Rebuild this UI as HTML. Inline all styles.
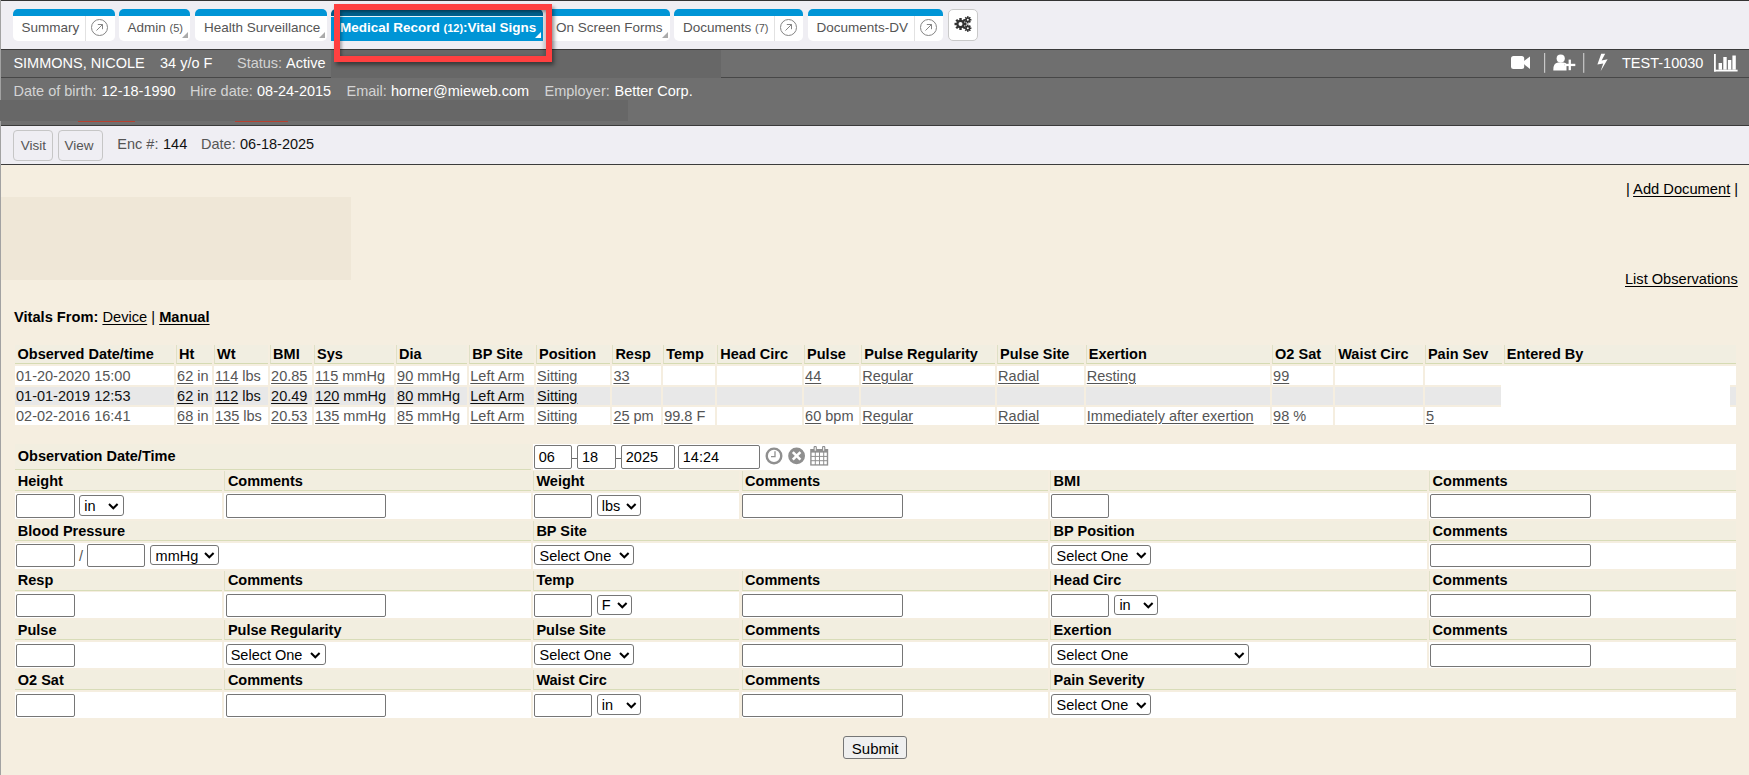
<!DOCTYPE html><html><head><meta charset="utf-8"><style>
*{box-sizing:border-box}
html,body{margin:0;padding:0}
body{width:1749px;height:775px;overflow:hidden;position:relative;background:#f5eee0;font-family:"Liberation Sans",sans-serif;color:#000}
.a{position:absolute}
.t{line-height:20px;white-space:nowrap}
u{text-decoration:underline;text-underline-offset:1.5px}
.tab{position:absolute;top:9px;height:31.6px;background:#fff;border-top:7px solid #0095d6;border-radius:5px;font-size:13.5px;color:#555;white-space:nowrap}
.tab .tt{position:absolute;top:4.3px;line-height:16px}
.tab small{font-size:11px}
.tab .dv{position:absolute;top:0;bottom:0;width:1px;background:#e2e2e2}
.tab .circ{position:absolute;top:2.5px;width:17px;height:17px;border:1px solid #858585;border-radius:50%}
.tri{position:absolute;right:2px;bottom:3px;width:0;height:0;border-left:6px solid transparent;border-bottom:6px solid #aaa}
.btn{position:absolute;border:1px solid #c6c6c6;border-radius:4px;font-size:13.5px;color:#555;text-align:center}
.inp{position:absolute;background:#fff;border:1px solid #767676;border-radius:2px}
.sel{position:absolute;background:#fff;border:1px solid #767676;border-radius:3px;font-size:14.5px;line-height:18px;white-space:nowrap;overflow:hidden}
.sel svg{position:absolute;top:6.5px}
</style></head><body>
<div class="a" style="left:0.00px;top:0.00px;width:1749.00px;height:49.00px;background:#efeef3;border-top:1px solid #333"></div>
<div class="tab" style="left:13px;width:102px;"><span class="tt" style="left:8.5px">Summary</span><div class="dv" style="left:71.5px"></div><div class="circ" style="left:77.5px"><svg width="15" height="15" viewBox="0 0 15 15" style="position:absolute;left:0;top:0"><path d="M4.5 10.5 L10.5 4.5 M5.8 4.5 H10.5 V9.2" stroke="#858585" stroke-width="1" fill="none"/></svg></div></div>
<div class="tab" style="left:119px;width:71px;"><span class="tt" style="left:8.5px">Admin <small>(5)</small></span><div class="tri"></div></div>
<div class="tab" style="left:195px;width:132px;"><span class="tt" style="left:9px">Health Surveillance</span><div class="tri"></div></div>
<div class="tab" style="left:547px;width:123px;"><span class="tt" style="left:9px">On Screen Forms</span><div class="tri"></div></div>
<div class="tab" style="left:674px;width:129px;"><span class="tt" style="left:9px">Documents <small>(7)</small></span><div class="dv" style="left:99.5px"></div><div class="circ" style="left:105.5px"><svg width="15" height="15" viewBox="0 0 15 15" style="position:absolute;left:0;top:0"><path d="M4.5 10.5 L10.5 4.5 M5.8 4.5 H10.5 V9.2" stroke="#858585" stroke-width="1" fill="none"/></svg></div></div>
<div class="tab" style="left:808px;width:135px;"><span class="tt" style="left:8.5px">Documents-DV</span><div class="dv" style="left:105.5px"></div><div class="circ" style="left:111.5px"><svg width="15" height="15" viewBox="0 0 15 15" style="position:absolute;left:0;top:0"><path d="M4.5 10.5 L10.5 4.5 M5.8 4.5 H10.5 V9.2" stroke="#858585" stroke-width="1" fill="none"/></svg></div></div>
<div class="a" style="left:948px;top:9px;width:30px;height:31.5px;background:#fff;border:1px solid #c9c9c9;border-radius:5px"></div>
<svg class="a" style="left:953px;top:16px" width="20" height="18" viewBox="0 0 20 18">
<g fill="#333">
<circle cx="7.5" cy="8" r="4.2"/>
<g transform="translate(7.5 8)"><rect x="-1.2" y="-6" width="2.4" height="12"/><rect x="-6" y="-1.2" width="12" height="2.4"/><rect x="-1.2" y="-6" width="2.4" height="12" transform="rotate(45)"/><rect x="-1.2" y="-6" width="2.4" height="12" transform="rotate(-45)"/></g>
<circle cx="14.8" cy="3.8" r="2.4"/>
<g transform="translate(14.8 3.8)"><rect x="-.8" y="-3.6" width="1.6" height="7.2"/><rect x="-3.6" y="-.8" width="7.2" height="1.6"/><rect x="-.8" y="-3.6" width="1.6" height="7.2" transform="rotate(45)"/><rect x="-.8" y="-3.6" width="1.6" height="7.2" transform="rotate(-45)"/></g>
<circle cx="14.8" cy="12.2" r="2.4"/>
<g transform="translate(14.8 12.2)"><rect x="-.8" y="-3.6" width="1.6" height="7.2"/><rect x="-3.6" y="-.8" width="7.2" height="1.6"/><rect x="-.8" y="-3.6" width="1.6" height="7.2" transform="rotate(45)"/><rect x="-.8" y="-3.6" width="1.6" height="7.2" transform="rotate(-45)"/></g>
</g>
<circle cx="7.5" cy="8" r="2" fill="#fff"/><circle cx="14.8" cy="3.8" r="1" fill="#fff"/><circle cx="14.8" cy="12.2" r="1" fill="#fff"/>
</svg>
<div class="a" style="left:0.00px;top:49.00px;width:1749.00px;height:77.00px;background:#6f6f6f;border-top:1px solid #3a3a3a;border-bottom:1px solid #3a3a3a"></div>
<div class="a" style="left:0.00px;top:77.00px;width:1749.00px;height:1.00px;background:#474747"></div>
<div class="a" style="left:331.00px;top:50.00px;width:390.00px;height:27.60px;background:#676767"></div>
<div class="a" style="left:0.00px;top:100.00px;width:628.00px;height:21.00px;background:#676767"></div>
<div class="a" style="left:78.00px;top:121.00px;width:57.00px;height:1.00px;background:#b8402f"></div>
<div class="a" style="left:235.00px;top:121.00px;width:53.00px;height:1.00px;background:#b8402f"></div>
<div class="a t" style="left:13.40px;top:52.88px;font-size:14.5px;color:#fff;">SIMMONS, NICOLE</div>
<div class="a t" style="left:160.00px;top:52.88px;font-size:14.5px;color:#fff;">34 y/o F</div>
<div class="a t" style="left:237.00px;top:52.88px;font-size:14.5px;color:#d4d4d4;">Status:</div>
<div class="a t" style="left:286.00px;top:52.88px;font-size:14.5px;color:#fff;">Active</div>
<div class="a t" style="left:13.50px;top:80.68px;font-size:14.5px;color:#d4d4d4;">Date of birth:</div>
<div class="a t" style="left:101.50px;top:80.68px;font-size:14.5px;color:#fff;">12-18-1990</div>
<div class="a t" style="left:190.00px;top:80.68px;font-size:14.5px;color:#d4d4d4;">Hire date:</div>
<div class="a t" style="left:257.00px;top:80.68px;font-size:14.5px;color:#fff;">08-24-2015</div>
<div class="a t" style="left:346.50px;top:80.68px;font-size:14.5px;color:#d4d4d4;">Email:</div>
<div class="a t" style="left:391.00px;top:80.68px;font-size:14.5px;color:#fff;">horner@mieweb.com</div>
<div class="a t" style="left:544.50px;top:80.68px;font-size:14.5px;color:#d4d4d4;">Employer:</div>
<div class="a t" style="left:614.50px;top:80.68px;font-size:14.5px;color:#fff;">Better Corp.</div>
<div class="a t" style="left:1622.00px;top:52.88px;font-size:14.5px;color:#fff;">TEST-10030</div>
<svg class="a" style="left:1505px;top:50px" width="240" height="27" viewBox="1505 50 240 27">
<g fill="#fff">
<rect x="1511" y="56" width="13.2" height="13" rx="2.5"/>
<path d="M1522 62.5 L1530 56.6 V69 Z"/>
<rect x="1544" y="53" width="1.2" height="19.8" fill="#c8c8c8"/>
<circle cx="1560.7" cy="58.6" r="4.1"/>
<path d="M1553.3 70.4 Q1553 63 1558 62.6 L1563.5 62.6 Q1566 63 1566.5 64 L1566.5 70.4 Z"/>
<rect x="1583.1" y="53" width="1.2" height="19.8" fill="#c8c8c8"/>
<path d="M1601.2 53.8 L1605.2 53.8 L1601.6 60.6 L1607.6 59.2 L1600.6 71.2 L1603.2 63.4 L1597.4 64.6 Z"/>
<rect x="1714" y="54" width="1.8" height="17.5"/>
<rect x="1714" y="69.7" width="23.6" height="1.8"/>
<rect x="1718.6" y="63" width="3.4" height="6.7"/>
<rect x="1723.3" y="57" width="3.4" height="12.7"/>
<rect x="1727.9" y="60" width="3.4" height="9.7"/>
<rect x="1732.4" y="55.5" width="3.4" height="14.2"/>
</g>
<g stroke="#6f6f6f" stroke-width="1.6"><path d="M1564.3 64.8 H1576 M1570 59.3 V70.6"/></g>
<g fill="#fff"><rect x="1564.3" y="63.8" width="11" height="2.3"/><rect x="1568.6" y="59.6" width="2.3" height="10.6"/></g>
</svg>
<div class="a" style="left:0.00px;top:126.00px;width:1749.00px;height:39.00px;background:#efeef3;border-bottom:1.5px solid #3c3c3c"></div>
<div class="btn" style="left:13.3px;top:130.2px;width:40.2px;height:31.2px"></div>
<div class="btn" style="left:58.1px;top:130.2px;width:44.6px;height:31.2px"></div>
<div class="a t" style="left:20.80px;top:135.62px;font-size:13.5px;color:#555;">Visit</div>
<div class="a t" style="left:64.50px;top:135.62px;font-size:13.5px;color:#555;">View</div>
<div class="a t" style="left:117.30px;top:133.98px;font-size:14.5px;color:#555;">Enc #:</div>
<div class="a t" style="left:163.00px;top:133.98px;font-size:14.5px;color:#111;">144</div>
<div class="a t" style="left:201.00px;top:133.98px;font-size:14.5px;color:#555;">Date:</div>
<div class="a t" style="left:240.00px;top:133.98px;font-size:14.5px;color:#111;">06-18-2025</div>
<div class="a" style="left:0.00px;top:196.70px;width:351.00px;height:83.30px;background:#efe7d7"></div>
<div class="a t" style="left:1626.00px;top:179.31px;font-size:14.7px;color:#000;">| <u>Add Document</u> |</div>
<div class="a t" style="left:1625.00px;top:269.14px;font-size:14.6px;color:#000;"><u>List Observations</u></div>
<div class="a t" style="left:14.00px;top:306.62px;font-size:14.65px;color:#000;"><b>Vitals From:</b> <u>Device</u> | <b><u>Manual</u></b></div>
<div class="a" style="left:15.00px;top:345.00px;width:159.10px;height:18.60px;background:#f1eee1;border-bottom:1px solid #d5dbb3;"></div>
<div class="a t" style="left:17.50px;top:343.78px;font-size:14.5px;color:#000;font-weight:bold;">Observed Date/time</div>
<div class="a" style="left:176.10px;top:345.00px;width:36.00px;height:18.60px;background:#f1eee1;border-bottom:1px solid #d5dbb3;border-left:1px solid #dfe0c6;"></div>
<div class="a t" style="left:179.10px;top:343.78px;font-size:14.5px;color:#000;font-weight:bold;">Ht</div>
<div class="a" style="left:214.10px;top:345.00px;width:54.00px;height:18.60px;background:#f1eee1;border-bottom:1px solid #d5dbb3;border-left:1px solid #dfe0c6;"></div>
<div class="a t" style="left:217.10px;top:343.78px;font-size:14.5px;color:#000;font-weight:bold;">Wt</div>
<div class="a" style="left:270.10px;top:345.00px;width:42.00px;height:18.60px;background:#f1eee1;border-bottom:1px solid #d5dbb3;border-left:1px solid #dfe0c6;"></div>
<div class="a t" style="left:273.10px;top:343.78px;font-size:14.5px;color:#000;font-weight:bold;">BMI</div>
<div class="a" style="left:314.10px;top:345.00px;width:80.00px;height:18.60px;background:#f1eee1;border-bottom:1px solid #d5dbb3;border-left:1px solid #dfe0c6;"></div>
<div class="a t" style="left:317.10px;top:343.78px;font-size:14.5px;color:#000;font-weight:bold;">Sys</div>
<div class="a" style="left:396.10px;top:345.00px;width:71.20px;height:18.60px;background:#f1eee1;border-bottom:1px solid #d5dbb3;border-left:1px solid #dfe0c6;"></div>
<div class="a t" style="left:399.10px;top:343.78px;font-size:14.5px;color:#000;font-weight:bold;">Dia</div>
<div class="a" style="left:469.30px;top:345.00px;width:64.70px;height:18.60px;background:#f1eee1;border-bottom:1px solid #d5dbb3;border-left:1px solid #dfe0c6;"></div>
<div class="a t" style="left:472.30px;top:343.78px;font-size:14.5px;color:#000;font-weight:bold;">BP Site</div>
<div class="a" style="left:536.00px;top:345.00px;width:74.40px;height:18.60px;background:#f1eee1;border-bottom:1px solid #d5dbb3;border-left:1px solid #dfe0c6;"></div>
<div class="a t" style="left:539.00px;top:343.78px;font-size:14.5px;color:#000;font-weight:bold;">Position</div>
<div class="a" style="left:612.40px;top:345.00px;width:48.80px;height:18.60px;background:#f1eee1;border-bottom:1px solid #d5dbb3;border-left:1px solid #dfe0c6;"></div>
<div class="a t" style="left:615.40px;top:343.78px;font-size:14.5px;color:#000;font-weight:bold;">Resp</div>
<div class="a" style="left:663.20px;top:345.00px;width:52.10px;height:18.60px;background:#f1eee1;border-bottom:1px solid #d5dbb3;border-left:1px solid #dfe0c6;"></div>
<div class="a t" style="left:666.20px;top:343.78px;font-size:14.5px;color:#000;font-weight:bold;">Temp</div>
<div class="a" style="left:717.30px;top:345.00px;width:84.80px;height:18.60px;background:#f1eee1;border-bottom:1px solid #d5dbb3;border-left:1px solid #dfe0c6;"></div>
<div class="a t" style="left:720.30px;top:343.78px;font-size:14.5px;color:#000;font-weight:bold;">Head Circ</div>
<div class="a" style="left:804.10px;top:345.00px;width:55.20px;height:18.60px;background:#f1eee1;border-bottom:1px solid #d5dbb3;border-left:1px solid #dfe0c6;"></div>
<div class="a t" style="left:807.10px;top:343.78px;font-size:14.5px;color:#000;font-weight:bold;">Pulse</div>
<div class="a" style="left:861.30px;top:345.00px;width:133.80px;height:18.60px;background:#f1eee1;border-bottom:1px solid #d5dbb3;border-left:1px solid #dfe0c6;"></div>
<div class="a t" style="left:864.30px;top:343.78px;font-size:14.5px;color:#000;font-weight:bold;">Pulse Regularity</div>
<div class="a" style="left:997.10px;top:345.00px;width:86.70px;height:18.60px;background:#f1eee1;border-bottom:1px solid #d5dbb3;border-left:1px solid #dfe0c6;"></div>
<div class="a t" style="left:1000.10px;top:343.78px;font-size:14.5px;color:#000;font-weight:bold;">Pulse Site</div>
<div class="a" style="left:1085.80px;top:345.00px;width:184.30px;height:18.60px;background:#f1eee1;border-bottom:1px solid #d5dbb3;border-left:1px solid #dfe0c6;"></div>
<div class="a t" style="left:1088.80px;top:343.78px;font-size:14.5px;color:#000;font-weight:bold;">Exertion</div>
<div class="a" style="left:1272.10px;top:345.00px;width:61.10px;height:18.60px;background:#f1eee1;border-bottom:1px solid #d5dbb3;border-left:1px solid #dfe0c6;"></div>
<div class="a t" style="left:1275.10px;top:343.78px;font-size:14.5px;color:#000;font-weight:bold;">O2 Sat</div>
<div class="a" style="left:1335.20px;top:345.00px;width:87.70px;height:18.60px;background:#f1eee1;border-bottom:1px solid #d5dbb3;border-left:1px solid #dfe0c6;"></div>
<div class="a t" style="left:1338.20px;top:343.78px;font-size:14.5px;color:#000;font-weight:bold;">Waist Circ</div>
<div class="a" style="left:1424.90px;top:345.00px;width:76.90px;height:18.60px;background:#f1eee1;border-bottom:1px solid #d5dbb3;border-left:1px solid #dfe0c6;"></div>
<div class="a t" style="left:1427.90px;top:343.78px;font-size:14.5px;color:#000;font-weight:bold;">Pain Sev</div>
<div class="a" style="left:1503.80px;top:345.00px;width:232.20px;height:18.60px;background:#f1eee1;border-bottom:1px solid #d5dbb3;border-left:1px solid #dfe0c6;"></div>
<div class="a t" style="left:1506.80px;top:343.78px;font-size:14.5px;color:#000;font-weight:bold;">Entered By</div>
<div class="a" style="left:15.00px;top:366.10px;width:159.10px;height:18.70px;background:#fff"></div>
<div class="a t" style="left:16.00px;top:365.88px;font-size:14.5px;color:#555;">01-20-2020 15:00</div>
<div class="a" style="left:176.10px;top:366.10px;width:36.00px;height:18.70px;background:#fff"></div>
<div class="a t" style="left:177.10px;top:365.88px;font-size:14.5px;color:#555;"><u>62</u> in</div>
<div class="a" style="left:214.10px;top:366.10px;width:54.00px;height:18.70px;background:#fff"></div>
<div class="a t" style="left:215.10px;top:365.88px;font-size:14.5px;color:#555;"><u>114</u> lbs</div>
<div class="a" style="left:270.10px;top:366.10px;width:42.00px;height:18.70px;background:#fff"></div>
<div class="a t" style="left:271.10px;top:365.88px;font-size:14.5px;color:#555;"><u>20.85</u></div>
<div class="a" style="left:314.10px;top:366.10px;width:80.00px;height:18.70px;background:#fff"></div>
<div class="a t" style="left:315.10px;top:365.88px;font-size:14.5px;color:#555;"><u>115</u> mmHg</div>
<div class="a" style="left:396.10px;top:366.10px;width:71.20px;height:18.70px;background:#fff"></div>
<div class="a t" style="left:397.10px;top:365.88px;font-size:14.5px;color:#555;"><u>90</u> mmHg</div>
<div class="a" style="left:469.30px;top:366.10px;width:64.70px;height:18.70px;background:#fff"></div>
<div class="a t" style="left:470.30px;top:365.88px;font-size:14.5px;color:#555;"><u>Left Arm</u></div>
<div class="a" style="left:536.00px;top:366.10px;width:74.40px;height:18.70px;background:#fff"></div>
<div class="a t" style="left:537.00px;top:365.88px;font-size:14.5px;color:#555;"><u>Sitting</u></div>
<div class="a" style="left:612.40px;top:366.10px;width:48.80px;height:18.70px;background:#fff"></div>
<div class="a t" style="left:613.40px;top:365.88px;font-size:14.5px;color:#555;"><u>33</u></div>
<div class="a" style="left:663.20px;top:366.10px;width:52.10px;height:18.70px;background:#fff"></div>
<div class="a" style="left:717.30px;top:366.10px;width:84.80px;height:18.70px;background:#fff"></div>
<div class="a" style="left:804.10px;top:366.10px;width:55.20px;height:18.70px;background:#fff"></div>
<div class="a t" style="left:805.10px;top:365.88px;font-size:14.5px;color:#555;"><u>44</u></div>
<div class="a" style="left:861.30px;top:366.10px;width:133.80px;height:18.70px;background:#fff"></div>
<div class="a t" style="left:862.30px;top:365.88px;font-size:14.5px;color:#555;"><u>Regular</u></div>
<div class="a" style="left:997.10px;top:366.10px;width:86.70px;height:18.70px;background:#fff"></div>
<div class="a t" style="left:998.10px;top:365.88px;font-size:14.5px;color:#555;"><u>Radial</u></div>
<div class="a" style="left:1085.80px;top:366.10px;width:184.30px;height:18.70px;background:#fff"></div>
<div class="a t" style="left:1086.80px;top:365.88px;font-size:14.5px;color:#555;"><u>Resting</u></div>
<div class="a" style="left:1272.10px;top:366.10px;width:61.10px;height:18.70px;background:#fff"></div>
<div class="a t" style="left:1273.10px;top:365.88px;font-size:14.5px;color:#555;"><u>99</u></div>
<div class="a" style="left:1335.20px;top:366.10px;width:87.70px;height:18.70px;background:#fff"></div>
<div class="a" style="left:1424.90px;top:366.10px;width:76.90px;height:18.70px;background:#fff"></div>
<div class="a" style="left:1503.80px;top:366.10px;width:232.20px;height:18.70px;background:#fff"></div>
<div class="a" style="left:15.00px;top:386.90px;width:159.10px;height:17.90px;background:#e8e8e8"></div>
<div class="a t" style="left:16.00px;top:385.68px;font-size:14.5px;color:#111;">01-01-2019 12:53</div>
<div class="a" style="left:176.10px;top:386.90px;width:36.00px;height:17.90px;background:#e8e8e8"></div>
<div class="a t" style="left:177.10px;top:385.68px;font-size:14.5px;color:#111;"><u>62</u> in</div>
<div class="a" style="left:214.10px;top:386.90px;width:54.00px;height:17.90px;background:#e8e8e8"></div>
<div class="a t" style="left:215.10px;top:385.68px;font-size:14.5px;color:#111;"><u>112</u> lbs</div>
<div class="a" style="left:270.10px;top:386.90px;width:42.00px;height:17.90px;background:#e8e8e8"></div>
<div class="a t" style="left:271.10px;top:385.68px;font-size:14.5px;color:#111;"><u>20.49</u></div>
<div class="a" style="left:314.10px;top:386.90px;width:80.00px;height:17.90px;background:#e8e8e8"></div>
<div class="a t" style="left:315.10px;top:385.68px;font-size:14.5px;color:#111;"><u>120</u> mmHg</div>
<div class="a" style="left:396.10px;top:386.90px;width:71.20px;height:17.90px;background:#e8e8e8"></div>
<div class="a t" style="left:397.10px;top:385.68px;font-size:14.5px;color:#111;"><u>80</u> mmHg</div>
<div class="a" style="left:469.30px;top:386.90px;width:64.70px;height:17.90px;background:#e8e8e8"></div>
<div class="a t" style="left:470.30px;top:385.68px;font-size:14.5px;color:#111;"><u>Left Arm</u></div>
<div class="a" style="left:536.00px;top:386.90px;width:74.40px;height:17.90px;background:#e8e8e8"></div>
<div class="a t" style="left:537.00px;top:385.68px;font-size:14.5px;color:#111;"><u>Sitting</u></div>
<div class="a" style="left:612.40px;top:386.90px;width:48.80px;height:17.90px;background:#e8e8e8"></div>
<div class="a" style="left:663.20px;top:386.90px;width:52.10px;height:17.90px;background:#e8e8e8"></div>
<div class="a" style="left:717.30px;top:386.90px;width:84.80px;height:17.90px;background:#e8e8e8"></div>
<div class="a" style="left:804.10px;top:386.90px;width:55.20px;height:17.90px;background:#e8e8e8"></div>
<div class="a" style="left:861.30px;top:386.90px;width:133.80px;height:17.90px;background:#e8e8e8"></div>
<div class="a" style="left:997.10px;top:386.90px;width:86.70px;height:17.90px;background:#e8e8e8"></div>
<div class="a" style="left:1085.80px;top:386.90px;width:184.30px;height:17.90px;background:#e8e8e8"></div>
<div class="a" style="left:1272.10px;top:386.90px;width:61.10px;height:17.90px;background:#e8e8e8"></div>
<div class="a" style="left:1335.20px;top:386.90px;width:87.70px;height:17.90px;background:#e8e8e8"></div>
<div class="a" style="left:1424.90px;top:386.90px;width:76.90px;height:17.90px;background:#e8e8e8"></div>
<div class="a" style="left:1503.80px;top:386.90px;width:232.20px;height:17.90px;background:#e8e8e8"></div>
<div class="a" style="left:15.00px;top:407.00px;width:159.10px;height:17.80px;background:#fff"></div>
<div class="a t" style="left:16.00px;top:405.58px;font-size:14.5px;color:#555;">02-02-2016 16:41</div>
<div class="a" style="left:176.10px;top:407.00px;width:36.00px;height:17.80px;background:#fff"></div>
<div class="a t" style="left:177.10px;top:405.58px;font-size:14.5px;color:#555;"><u>68</u> in</div>
<div class="a" style="left:214.10px;top:407.00px;width:54.00px;height:17.80px;background:#fff"></div>
<div class="a t" style="left:215.10px;top:405.58px;font-size:14.5px;color:#555;"><u>135</u> lbs</div>
<div class="a" style="left:270.10px;top:407.00px;width:42.00px;height:17.80px;background:#fff"></div>
<div class="a t" style="left:271.10px;top:405.58px;font-size:14.5px;color:#555;"><u>20.53</u></div>
<div class="a" style="left:314.10px;top:407.00px;width:80.00px;height:17.80px;background:#fff"></div>
<div class="a t" style="left:315.10px;top:405.58px;font-size:14.5px;color:#555;"><u>135</u> mmHg</div>
<div class="a" style="left:396.10px;top:407.00px;width:71.20px;height:17.80px;background:#fff"></div>
<div class="a t" style="left:397.10px;top:405.58px;font-size:14.5px;color:#555;"><u>85</u> mmHg</div>
<div class="a" style="left:469.30px;top:407.00px;width:64.70px;height:17.80px;background:#fff"></div>
<div class="a t" style="left:470.30px;top:405.58px;font-size:14.5px;color:#555;"><u>Left Arm</u></div>
<div class="a" style="left:536.00px;top:407.00px;width:74.40px;height:17.80px;background:#fff"></div>
<div class="a t" style="left:537.00px;top:405.58px;font-size:14.5px;color:#555;"><u>Sitting</u></div>
<div class="a" style="left:612.40px;top:407.00px;width:48.80px;height:17.80px;background:#fff"></div>
<div class="a t" style="left:613.40px;top:405.58px;font-size:14.5px;color:#555;"><u>25</u> pm</div>
<div class="a" style="left:663.20px;top:407.00px;width:52.10px;height:17.80px;background:#fff"></div>
<div class="a t" style="left:664.20px;top:405.58px;font-size:14.5px;color:#555;"><u>99.8</u> F</div>
<div class="a" style="left:717.30px;top:407.00px;width:84.80px;height:17.80px;background:#fff"></div>
<div class="a" style="left:804.10px;top:407.00px;width:55.20px;height:17.80px;background:#fff"></div>
<div class="a t" style="left:805.10px;top:405.58px;font-size:14.5px;color:#555;"><u>60</u> bpm</div>
<div class="a" style="left:861.30px;top:407.00px;width:133.80px;height:17.80px;background:#fff"></div>
<div class="a t" style="left:862.30px;top:405.58px;font-size:14.5px;color:#555;"><u>Regular</u></div>
<div class="a" style="left:997.10px;top:407.00px;width:86.70px;height:17.80px;background:#fff"></div>
<div class="a t" style="left:998.10px;top:405.58px;font-size:14.5px;color:#555;"><u>Radial</u></div>
<div class="a" style="left:1085.80px;top:407.00px;width:184.30px;height:17.80px;background:#fff"></div>
<div class="a t" style="left:1086.80px;top:405.58px;font-size:14.5px;color:#555;"><u>Immediately after exertion</u></div>
<div class="a" style="left:1272.10px;top:407.00px;width:61.10px;height:17.80px;background:#fff"></div>
<div class="a t" style="left:1273.10px;top:405.58px;font-size:14.5px;color:#555;"><u>98</u> %</div>
<div class="a" style="left:1335.20px;top:407.00px;width:87.70px;height:17.80px;background:#fff"></div>
<div class="a" style="left:1424.90px;top:407.00px;width:76.90px;height:17.80px;background:#fff"></div>
<div class="a t" style="left:1425.90px;top:405.58px;font-size:14.5px;color:#555;"><u>5</u></div>
<div class="a" style="left:1503.80px;top:407.00px;width:232.20px;height:17.80px;background:#fff"></div>
<div class="a" style="left:1500.80px;top:366.00px;width:229.20px;height:58.80px;background:#fff"></div>
<div class="a" style="left:15.00px;top:444.00px;width:516.00px;height:25.60px;background:#f2eee0;border-bottom:1px solid #d8dcb8;"></div>
<div class="a t" style="left:17.80px;top:445.78px;font-size:14.5px;color:#000;font-weight:bold;">Observation Date/Time</div>
<div class="a" style="left:532.80px;top:444.00px;width:1203.20px;height:25.60px;background:#fff"></div>
<div class="inp" style="left:534.30px;top:445.20px;width:38.10px;height:23.50px"></div>
<div class="a t" style="left:538.80px;top:447.18px;font-size:14.5px;color:#000;">06</div>
<div class="inp" style="left:577.40px;top:445.20px;width:38.50px;height:23.50px"></div>
<div class="a t" style="left:581.90px;top:447.18px;font-size:14.5px;color:#000;">18</div>
<div class="inp" style="left:621.30px;top:445.20px;width:53.30px;height:23.50px"></div>
<div class="a t" style="left:625.80px;top:447.18px;font-size:14.5px;color:#000;">2025</div>
<div class="inp" style="left:678.30px;top:445.20px;width:81.50px;height:23.50px"></div>
<div class="a t" style="left:682.80px;top:447.18px;font-size:14.5px;color:#000;">14:24</div>
<div class="a" style="left:572.40px;top:458.00px;width:5.00px;height:1.20px;background:#6a6a6a"></div>
<div class="a" style="left:615.90px;top:458.00px;width:5.40px;height:1.20px;background:#6a6a6a"></div>
<svg class="a" style="left:764px;top:446px" width="70" height="22" viewBox="764 446 70 22">
<circle cx="774" cy="455.9" r="7.3" fill="none" stroke="#8f8f8f" stroke-width="2.4"/>
<path d="M775 451.3 V456.6 H771" fill="none" stroke="#8f8f8f" stroke-width="1.3"/>
<circle cx="796.6" cy="455.9" r="8.4" fill="#8f8f8f"/>
<path d="M792.8 452.1 L800.4 459.7 M800.4 452.1 L792.8 459.7" stroke="#fff" stroke-width="2.6"/>
<rect x="810.2" y="449" width="18" height="16.6" fill="#8f8f8f"/>
<g fill="#fff">
<rect x="811.6" y="452.6" width="3.2" height="3.3"/><rect x="815.8" y="452.6" width="3.2" height="3.3"/><rect x="820" y="452.6" width="3.2" height="3.3"/><rect x="824.2" y="452.6" width="2.6" height="3.3"/>
<rect x="811.6" y="456.9" width="3.2" height="3.3"/><rect x="815.8" y="456.9" width="3.2" height="3.3"/><rect x="820" y="456.9" width="3.2" height="3.3"/><rect x="824.2" y="456.9" width="2.6" height="3.3"/>
<rect x="811.6" y="461.2" width="3.2" height="3.1"/><rect x="815.8" y="461.2" width="3.2" height="3.1"/><rect x="820" y="461.2" width="3.2" height="3.1"/><rect x="824.2" y="461.2" width="2.6" height="3.1"/>
</g>
<rect x="814.1" y="446.4" width="2.2" height="5" rx="1" fill="#fff" stroke="#8f8f8f" stroke-width="1.1"/><rect x="822.6" y="446.4" width="2.2" height="5" rx="1" fill="#fff" stroke="#8f8f8f" stroke-width="1.1"/>
</svg>
<div class="a" style="left:15.00px;top:471.00px;width:207.00px;height:20.00px;background:#f2eee0;border-bottom:1px solid #d8dcb8;"></div>
<div class="a t" style="left:17.80px;top:470.78px;font-size:14.5px;color:#000;font-weight:bold;">Height</div>
<div class="a" style="left:15.00px;top:492.80px;width:207.00px;height:26.00px;background:#fff"></div>
<div class="a" style="left:224.30px;top:471.00px;width:306.70px;height:20.00px;background:#f2eee0;border-bottom:1px solid #d8dcb8;border-left:1px solid #e0e0c8;"></div>
<div class="a t" style="left:227.90px;top:470.78px;font-size:14.5px;color:#000;font-weight:bold;">Comments</div>
<div class="a" style="left:224.30px;top:492.80px;width:306.70px;height:26.00px;background:#fff"></div>
<div class="a" style="left:532.80px;top:471.00px;width:206.20px;height:20.00px;background:#f2eee0;border-bottom:1px solid #d8dcb8;border-left:1px solid #e0e0c8;"></div>
<div class="a t" style="left:536.40px;top:470.78px;font-size:14.5px;color:#000;font-weight:bold;">Weight</div>
<div class="a" style="left:532.80px;top:492.80px;width:206.20px;height:26.00px;background:#fff"></div>
<div class="a" style="left:741.50px;top:471.00px;width:306.50px;height:20.00px;background:#f2eee0;border-bottom:1px solid #d8dcb8;border-left:1px solid #e0e0c8;"></div>
<div class="a t" style="left:745.10px;top:470.78px;font-size:14.5px;color:#000;font-weight:bold;">Comments</div>
<div class="a" style="left:741.50px;top:492.80px;width:306.50px;height:26.00px;background:#fff"></div>
<div class="a" style="left:1050.00px;top:471.00px;width:377.30px;height:20.00px;background:#f2eee0;border-bottom:1px solid #d8dcb8;border-left:1px solid #e0e0c8;"></div>
<div class="a t" style="left:1053.60px;top:470.78px;font-size:14.5px;color:#000;font-weight:bold;">BMI</div>
<div class="a" style="left:1050.00px;top:492.80px;width:377.30px;height:26.00px;background:#fff"></div>
<div class="a" style="left:1429.00px;top:471.00px;width:307.00px;height:20.00px;background:#f2eee0;border-bottom:1px solid #d8dcb8;border-left:1px solid #e0e0c8;"></div>
<div class="a t" style="left:1432.60px;top:470.78px;font-size:14.5px;color:#000;font-weight:bold;">Comments</div>
<div class="a" style="left:1429.00px;top:492.80px;width:307.00px;height:26.00px;background:#fff"></div>
<div class="a" style="left:15.00px;top:520.80px;width:516.00px;height:20.00px;background:#f2eee0;border-bottom:1px solid #d8dcb8;"></div>
<div class="a t" style="left:17.80px;top:520.58px;font-size:14.5px;color:#000;font-weight:bold;">Blood Pressure</div>
<div class="a" style="left:15.00px;top:542.60px;width:516.00px;height:26.00px;background:#fff"></div>
<div class="a" style="left:532.80px;top:520.80px;width:515.20px;height:20.00px;background:#f2eee0;border-bottom:1px solid #d8dcb8;border-left:1px solid #e0e0c8;"></div>
<div class="a t" style="left:536.40px;top:520.58px;font-size:14.5px;color:#000;font-weight:bold;">BP Site</div>
<div class="a" style="left:532.80px;top:542.60px;width:515.20px;height:26.00px;background:#fff"></div>
<div class="a" style="left:1050.00px;top:520.80px;width:377.30px;height:20.00px;background:#f2eee0;border-bottom:1px solid #d8dcb8;border-left:1px solid #e0e0c8;"></div>
<div class="a t" style="left:1053.60px;top:520.58px;font-size:14.5px;color:#000;font-weight:bold;">BP Position</div>
<div class="a" style="left:1050.00px;top:542.60px;width:377.30px;height:26.00px;background:#fff"></div>
<div class="a" style="left:1429.00px;top:520.80px;width:307.00px;height:20.00px;background:#f2eee0;border-bottom:1px solid #d8dcb8;border-left:1px solid #e0e0c8;"></div>
<div class="a t" style="left:1432.60px;top:520.58px;font-size:14.5px;color:#000;font-weight:bold;">Comments</div>
<div class="a" style="left:1429.00px;top:542.60px;width:307.00px;height:26.00px;background:#fff"></div>
<div class="a" style="left:15.00px;top:570.60px;width:207.00px;height:20.00px;background:#f2eee0;border-bottom:1px solid #d8dcb8;"></div>
<div class="a t" style="left:17.80px;top:570.38px;font-size:14.5px;color:#000;font-weight:bold;">Resp</div>
<div class="a" style="left:15.00px;top:592.40px;width:207.00px;height:26.00px;background:#fff"></div>
<div class="a" style="left:224.30px;top:570.60px;width:306.70px;height:20.00px;background:#f2eee0;border-bottom:1px solid #d8dcb8;border-left:1px solid #e0e0c8;"></div>
<div class="a t" style="left:227.90px;top:570.38px;font-size:14.5px;color:#000;font-weight:bold;">Comments</div>
<div class="a" style="left:224.30px;top:592.40px;width:306.70px;height:26.00px;background:#fff"></div>
<div class="a" style="left:532.80px;top:570.60px;width:206.20px;height:20.00px;background:#f2eee0;border-bottom:1px solid #d8dcb8;border-left:1px solid #e0e0c8;"></div>
<div class="a t" style="left:536.40px;top:570.38px;font-size:14.5px;color:#000;font-weight:bold;">Temp</div>
<div class="a" style="left:532.80px;top:592.40px;width:206.20px;height:26.00px;background:#fff"></div>
<div class="a" style="left:741.50px;top:570.60px;width:306.50px;height:20.00px;background:#f2eee0;border-bottom:1px solid #d8dcb8;border-left:1px solid #e0e0c8;"></div>
<div class="a t" style="left:745.10px;top:570.38px;font-size:14.5px;color:#000;font-weight:bold;">Comments</div>
<div class="a" style="left:741.50px;top:592.40px;width:306.50px;height:26.00px;background:#fff"></div>
<div class="a" style="left:1050.00px;top:570.60px;width:377.30px;height:20.00px;background:#f2eee0;border-bottom:1px solid #d8dcb8;border-left:1px solid #e0e0c8;"></div>
<div class="a t" style="left:1053.60px;top:570.38px;font-size:14.5px;color:#000;font-weight:bold;">Head Circ</div>
<div class="a" style="left:1050.00px;top:592.40px;width:377.30px;height:26.00px;background:#fff"></div>
<div class="a" style="left:1429.00px;top:570.60px;width:307.00px;height:20.00px;background:#f2eee0;border-bottom:1px solid #d8dcb8;border-left:1px solid #e0e0c8;"></div>
<div class="a t" style="left:1432.60px;top:570.38px;font-size:14.5px;color:#000;font-weight:bold;">Comments</div>
<div class="a" style="left:1429.00px;top:592.40px;width:307.00px;height:26.00px;background:#fff"></div>
<div class="a" style="left:15.00px;top:620.40px;width:207.00px;height:20.00px;background:#f2eee0;border-bottom:1px solid #d8dcb8;"></div>
<div class="a t" style="left:17.80px;top:620.18px;font-size:14.5px;color:#000;font-weight:bold;">Pulse</div>
<div class="a" style="left:15.00px;top:642.20px;width:207.00px;height:26.00px;background:#fff"></div>
<div class="a" style="left:224.30px;top:620.40px;width:306.70px;height:20.00px;background:#f2eee0;border-bottom:1px solid #d8dcb8;border-left:1px solid #e0e0c8;"></div>
<div class="a t" style="left:227.90px;top:620.18px;font-size:14.5px;color:#000;font-weight:bold;">Pulse Regularity</div>
<div class="a" style="left:224.30px;top:642.20px;width:306.70px;height:26.00px;background:#fff"></div>
<div class="a" style="left:532.80px;top:620.40px;width:206.20px;height:20.00px;background:#f2eee0;border-bottom:1px solid #d8dcb8;border-left:1px solid #e0e0c8;"></div>
<div class="a t" style="left:536.40px;top:620.18px;font-size:14.5px;color:#000;font-weight:bold;">Pulse Site</div>
<div class="a" style="left:532.80px;top:642.20px;width:206.20px;height:26.00px;background:#fff"></div>
<div class="a" style="left:741.50px;top:620.40px;width:306.50px;height:20.00px;background:#f2eee0;border-bottom:1px solid #d8dcb8;border-left:1px solid #e0e0c8;"></div>
<div class="a t" style="left:745.10px;top:620.18px;font-size:14.5px;color:#000;font-weight:bold;">Comments</div>
<div class="a" style="left:741.50px;top:642.20px;width:306.50px;height:26.00px;background:#fff"></div>
<div class="a" style="left:1050.00px;top:620.40px;width:377.30px;height:20.00px;background:#f2eee0;border-bottom:1px solid #d8dcb8;border-left:1px solid #e0e0c8;"></div>
<div class="a t" style="left:1053.60px;top:620.18px;font-size:14.5px;color:#000;font-weight:bold;">Exertion</div>
<div class="a" style="left:1050.00px;top:642.20px;width:377.30px;height:26.00px;background:#fff"></div>
<div class="a" style="left:1429.00px;top:620.40px;width:307.00px;height:20.00px;background:#f2eee0;border-bottom:1px solid #d8dcb8;border-left:1px solid #e0e0c8;"></div>
<div class="a t" style="left:1432.60px;top:620.18px;font-size:14.5px;color:#000;font-weight:bold;">Comments</div>
<div class="a" style="left:1429.00px;top:642.20px;width:307.00px;height:26.00px;background:#fff"></div>
<div class="a" style="left:15.00px;top:670.20px;width:207.00px;height:20.00px;background:#f2eee0;border-bottom:1px solid #d8dcb8;"></div>
<div class="a t" style="left:17.80px;top:669.98px;font-size:14.5px;color:#000;font-weight:bold;">O2 Sat</div>
<div class="a" style="left:15.00px;top:692.00px;width:207.00px;height:26.00px;background:#fff"></div>
<div class="a" style="left:224.30px;top:670.20px;width:306.70px;height:20.00px;background:#f2eee0;border-bottom:1px solid #d8dcb8;border-left:1px solid #e0e0c8;"></div>
<div class="a t" style="left:227.90px;top:669.98px;font-size:14.5px;color:#000;font-weight:bold;">Comments</div>
<div class="a" style="left:224.30px;top:692.00px;width:306.70px;height:26.00px;background:#fff"></div>
<div class="a" style="left:532.80px;top:670.20px;width:206.20px;height:20.00px;background:#f2eee0;border-bottom:1px solid #d8dcb8;border-left:1px solid #e0e0c8;"></div>
<div class="a t" style="left:536.40px;top:669.98px;font-size:14.5px;color:#000;font-weight:bold;">Waist Circ</div>
<div class="a" style="left:532.80px;top:692.00px;width:206.20px;height:26.00px;background:#fff"></div>
<div class="a" style="left:741.50px;top:670.20px;width:306.50px;height:20.00px;background:#f2eee0;border-bottom:1px solid #d8dcb8;border-left:1px solid #e0e0c8;"></div>
<div class="a t" style="left:745.10px;top:669.98px;font-size:14.5px;color:#000;font-weight:bold;">Comments</div>
<div class="a" style="left:741.50px;top:692.00px;width:306.50px;height:26.00px;background:#fff"></div>
<div class="a" style="left:1050.00px;top:670.20px;width:686.00px;height:20.00px;background:#f2eee0;border-bottom:1px solid #d8dcb8;border-left:1px solid #e0e0c8;"></div>
<div class="a t" style="left:1053.60px;top:669.98px;font-size:14.5px;color:#000;font-weight:bold;">Pain Severity</div>
<div class="a" style="left:1050.00px;top:692.00px;width:686.00px;height:26.00px;background:#fff"></div>
<div class="inp" style="left:16.20px;top:494.30px;width:58.60px;height:23.30px"></div>
<div class="sel" style="left:79.10px;top:495.00px;width:44.60px;height:20.70px"><span class="a" style="left:4.2px;top:0.9px">in</span><svg width="11" height="7" viewBox="0 0 11 7" style="left:28.1px"><path d="M1 1 L5.3 5.3 L9.6 1" stroke="#000" stroke-width="2" fill="none"/></svg></div>
<div class="inp" style="left:225.50px;top:494.30px;width:160.50px;height:23.30px"></div>
<div class="inp" style="left:534.30px;top:494.30px;width:58.00px;height:23.30px"></div>
<div class="sel" style="left:596.50px;top:495.00px;width:44.50px;height:20.70px"><span class="a" style="left:4.2px;top:0.9px">lbs</span><svg width="11" height="7" viewBox="0 0 11 7" style="left:28.0px"><path d="M1 1 L5.3 5.3 L9.6 1" stroke="#000" stroke-width="2" fill="none"/></svg></div>
<div class="inp" style="left:742.40px;top:494.30px;width:160.50px;height:23.30px"></div>
<div class="inp" style="left:1051.30px;top:494.30px;width:57.60px;height:23.30px"></div>
<div class="inp" style="left:1430.20px;top:494.30px;width:160.50px;height:23.30px"></div>
<div class="inp" style="left:16.20px;top:544.10px;width:58.60px;height:23.30px"></div>
<div class="a t" style="left:79.00px;top:545.58px;font-size:14.5px;color:#555;">/</div>
<div class="inp" style="left:87.40px;top:544.10px;width:58.00px;height:23.30px"></div>
<div class="sel" style="left:150.40px;top:544.80px;width:69.10px;height:20.70px"><span class="a" style="left:4.2px;top:0.9px">mmHg</span><svg width="11" height="7" viewBox="0 0 11 7" style="left:52.6px"><path d="M1 1 L5.3 5.3 L9.6 1" stroke="#000" stroke-width="2" fill="none"/></svg></div>
<div class="sel" style="left:534.30px;top:544.80px;width:100.00px;height:20.70px"><span class="a" style="left:4.2px;top:0.9px">Select One</span><svg width="11" height="7" viewBox="0 0 11 7" style="left:83.5px"><path d="M1 1 L5.3 5.3 L9.6 1" stroke="#000" stroke-width="2" fill="none"/></svg></div>
<div class="sel" style="left:1051.30px;top:544.80px;width:100.00px;height:20.70px"><span class="a" style="left:4.2px;top:0.9px">Select One</span><svg width="11" height="7" viewBox="0 0 11 7" style="left:83.5px"><path d="M1 1 L5.3 5.3 L9.6 1" stroke="#000" stroke-width="2" fill="none"/></svg></div>
<div class="inp" style="left:1430.20px;top:544.10px;width:160.50px;height:23.30px"></div>
<div class="inp" style="left:16.20px;top:593.90px;width:58.60px;height:23.30px"></div>
<div class="inp" style="left:225.50px;top:593.90px;width:160.50px;height:23.30px"></div>
<div class="inp" style="left:534.30px;top:593.90px;width:58.00px;height:23.30px"></div>
<div class="sel" style="left:596.50px;top:594.60px;width:35.70px;height:20.70px"><span class="a" style="left:4.2px;top:0.9px">F</span><svg width="11" height="7" viewBox="0 0 11 7" style="left:19.2px"><path d="M1 1 L5.3 5.3 L9.6 1" stroke="#000" stroke-width="2" fill="none"/></svg></div>
<div class="inp" style="left:742.40px;top:593.90px;width:160.50px;height:23.30px"></div>
<div class="inp" style="left:1051.30px;top:593.90px;width:57.60px;height:23.30px"></div>
<div class="sel" style="left:1114.20px;top:594.60px;width:44.20px;height:20.70px"><span class="a" style="left:4.2px;top:0.9px">in</span><svg width="11" height="7" viewBox="0 0 11 7" style="left:27.7px"><path d="M1 1 L5.3 5.3 L9.6 1" stroke="#000" stroke-width="2" fill="none"/></svg></div>
<div class="inp" style="left:1430.20px;top:593.90px;width:160.50px;height:23.30px"></div>
<div class="inp" style="left:16.20px;top:643.70px;width:58.60px;height:23.30px"></div>
<div class="sel" style="left:225.50px;top:644.40px;width:100.00px;height:20.70px"><span class="a" style="left:4.2px;top:0.9px">Select One</span><svg width="11" height="7" viewBox="0 0 11 7" style="left:83.5px"><path d="M1 1 L5.3 5.3 L9.6 1" stroke="#000" stroke-width="2" fill="none"/></svg></div>
<div class="sel" style="left:534.30px;top:644.40px;width:100.00px;height:20.70px"><span class="a" style="left:4.2px;top:0.9px">Select One</span><svg width="11" height="7" viewBox="0 0 11 7" style="left:83.5px"><path d="M1 1 L5.3 5.3 L9.6 1" stroke="#000" stroke-width="2" fill="none"/></svg></div>
<div class="inp" style="left:742.40px;top:643.70px;width:160.50px;height:23.30px"></div>
<div class="sel" style="left:1051.30px;top:644.40px;width:198.00px;height:20.70px"><span class="a" style="left:4.2px;top:0.9px">Select One</span><svg width="11" height="7" viewBox="0 0 11 7" style="left:181.5px"><path d="M1 1 L5.3 5.3 L9.6 1" stroke="#000" stroke-width="2" fill="none"/></svg></div>
<div class="inp" style="left:1430.20px;top:643.70px;width:160.50px;height:23.30px"></div>
<div class="inp" style="left:16.20px;top:693.50px;width:58.60px;height:23.30px"></div>
<div class="inp" style="left:225.50px;top:693.50px;width:160.50px;height:23.30px"></div>
<div class="inp" style="left:534.30px;top:693.50px;width:58.00px;height:23.30px"></div>
<div class="sel" style="left:596.50px;top:694.20px;width:44.50px;height:20.70px"><span class="a" style="left:4.2px;top:0.9px">in</span><svg width="11" height="7" viewBox="0 0 11 7" style="left:28.0px"><path d="M1 1 L5.3 5.3 L9.6 1" stroke="#000" stroke-width="2" fill="none"/></svg></div>
<div class="inp" style="left:742.40px;top:693.50px;width:160.50px;height:23.30px"></div>
<div class="sel" style="left:1051.30px;top:694.20px;width:100.00px;height:20.70px"><span class="a" style="left:4.2px;top:0.9px">Select One</span><svg width="11" height="7" viewBox="0 0 11 7" style="left:83.5px"><path d="M1 1 L5.3 5.3 L9.6 1" stroke="#000" stroke-width="2" fill="none"/></svg></div>
<div class="a" style="left:843.2px;top:736.3px;width:63.6px;height:23.2px;background:#efefef;border:1px solid #767676;border-radius:3px"></div>
<div class="a t" style="left:851.80px;top:738.50px;font-size:15px;color:#000;">Submit</div>
<div class="tab" style="left:331px;width:212px;background:#0095d6;border-top-color:#005f8b;border-radius:5px 5px 0 0;color:#fff;font-weight:bold"><div class="a" style="left:0;right:0;top:0;height:1px;background:#e8f4fa"></div><span class="tt" style="left:9px">Medical Record <small>(12)</small>:Vital Signs</span><div class="tri" style="border-bottom-color:#fff"></div></div>
<div class="a" style="left:334px;top:4px;width:218px;height:58px;border:6px solid #ff4040;box-shadow:2px 3px 4px rgba(0,0,0,.45), inset 2px 2px 3px rgba(0,0,0,.3), inset -3px 0 3px rgba(0,0,0,.15)"></div>
<div class="a" style="left:0.00px;top:0.00px;width:1.20px;height:100.00px;background:#a2a2a2"></div>
<div class="a" style="left:0.00px;top:121.00px;width:1.20px;height:654.00px;background:#a2a2a2"></div>
</body></html>
